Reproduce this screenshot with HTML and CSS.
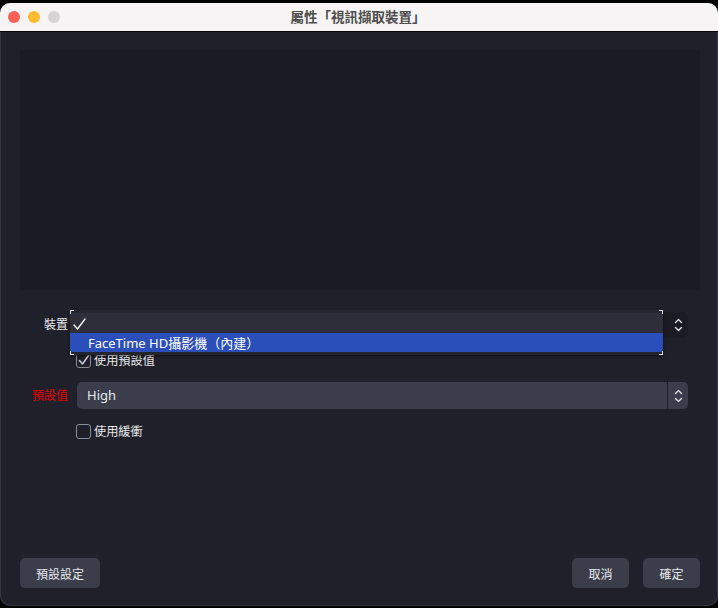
FILE: index.html
```html
<!DOCTYPE html>
<html>
<head>
  <meta charset="utf-8">
  <title>屬性「視訊擷取裝置」</title>
  <link rel="stylesheet" href="styles.css">
</head>
<body>
  <div class="window">
    <div class="titlebar">
      <div class="lights">
        <span class="light red"></span>
        <span class="light yellow"></span>
        <span class="light gray"></span>
      </div>
      <div class="title">屬性「視訊擷取裝置」</div>
    </div>

    <div class="content">
      <div class="preview"></div>

      <div class="form">
        <label class="label">裝置</label>
        <div class="combo combo-dark">
          <div class="combo-text"></div>
          <div class="combo-arrow">
            <svg width="9" height="14" viewBox="0 0 9 14" fill="none" stroke="#e6e6ea" stroke-width="1.3" stroke-linecap="round" stroke-linejoin="round">
              <path d="M1.5 4.5 4.5 1.5 7.5 4.5" />
              <path d="M1.5 9.5 4.5 12.5 7.5 9.5" />
            </svg>
          </div>

          <!-- open popup of the device list -->
          <div class="popup">
            <div class="popup-item">
              <svg class="tick" width="13" height="12" viewBox="0 0 13 12" fill="none" stroke="#f2f2f2" stroke-width="1.4" stroke-linecap="round" stroke-linejoin="round">
                <path d="M1 7 4.5 11 12 1" />
              </svg>
            </div>
            <div class="popup-item selected">FaceTime HD攝影機（內建）</div>
            <span class="mark tl"></span>
            <span class="mark tr"></span>
            <span class="mark bl"></span>
            <span class="mark br"></span>
          </div>
        </div>

        <span></span>
        <div class="check">
          <span class="box checked">
            <svg width="12" height="12" viewBox="0 0 12 12" fill="none" stroke="#c9cad0" stroke-width="1.5" stroke-linecap="round" stroke-linejoin="round">
              <path d="M1.5 6.5 4.5 10 10.5 1.5" />
            </svg>
          </span>
          <span>使用預設值</span>
        </div>

        <label class="label warn">預設值</label>
        <div class="combo">
          <div class="combo-text">High</div>
          <div class="combo-arrow sep">
            <svg width="9" height="14" viewBox="0 0 9 14" fill="none" stroke="#e6e6ea" stroke-width="1.3" stroke-linecap="round" stroke-linejoin="round">
              <path d="M1.5 4.5 4.5 1.5 7.5 4.5" />
              <path d="M1.5 9.5 4.5 12.5 7.5 9.5" />
            </svg>
          </div>
        </div>

        <span></span>
        <div class="check">
          <span class="box"></span>
          <span>使用緩衝</span>
        </div>
      </div>

      <div class="footer">
        <button class="btn btn-wide">預設設定</button>
        <div class="footer-right">
          <button class="btn">取消</button>
          <button class="btn">確定</button>
        </div>
      </div>
    </div>
  </div>
</body>
</html>
```

FILE: styles.css
```css
:root {
  --bg-color: #1f2029;
  --preview-color: #1a1b23;
  --field-color: #3b3e4a;
  --menu-color: #2d2e39;
  --select-color: #2a4fba;
  --text-color: #e8e8ec;
  --warn-color: #e60000;
  --border-color: #8a8c94;
}

html, body {
  margin: 0;
  background: #000;
}

body {
  width: 718px;
  height: 608px;
  overflow: hidden;
  font-family: "Noto Sans", "Noto Sans CJK TC", sans-serif;
  font-size: 12px;
  color: var(--text-color);
  -webkit-font-smoothing: antialiased;
}

.window {
  margin-top: 3px;
  height: 603px;
  border-radius: 10px;
  overflow: hidden;
  background: var(--bg-color);
  display: flex;
  flex-direction: column;
  box-shadow: inset 0 0 0 1px #34363e;
}

.titlebar {
  height: 28px;
  flex: none;
  display: flex;
  align-items: center;
  justify-content: center;
  position: relative;
  background: #f6f4f5;
  border-bottom: 1px solid #050505;
}

.lights {
  position: absolute;
  left: 8px;
  top: 8px;
  display: flex;
  gap: 8px;
}

.light {
  width: 12px;
  height: 12px;
  border-radius: 50%;
}

.light.red { background: #fe5f57; }
.light.yellow { background: #febc2e; }
.light.gray { background: #d6d5d6; }

.title {
  margin-left: -2px;
  margin-top: -2px;
  font-family: "Noto Sans CJK TC", sans-serif;
  font-size: 13.5px;
  font-weight: 700;
  color: #4d4d4d;
}

.content {
  flex: 1;
  display: flex;
  flex-direction: column;
  padding: 18px 18px 18px 20px;
}

.preview {
  height: 240px;
  background: var(--preview-color);
}

/* Property rows */
.form {
  margin-top: 22px;
  padding-right: 12px;
  display: grid;
  grid-template-columns: 48px 1fr;
  column-gap: 9px;
  row-gap: 14px;
  align-items: center;
}

.label {
  text-align: right;
  white-space: nowrap;
  line-height: 16px;
}

.label.warn {
  color: var(--warn-color);
}

.combo {
  position: relative;
  height: 27px;
  display: flex;
  border-radius: 5px;
  background: var(--field-color);
}

.combo-dark {
  height: 26px;
  background: var(--preview-color);
}

.combo-text {
  flex: 1;
  padding-left: 10px;
  font-size: 13px;
  line-height: 27px;
}

.combo-arrow {
  width: 20px;
  display: flex;
  align-items: center;
  justify-content: center;
}

.combo-arrow.sep {
  border-left: 1px solid var(--bg-color);
}

.popup {
  position: absolute;
  left: -7px;
  top: -2px;
  width: 593px;
  padding: 3px 0;
  background: #23242d;
  box-shadow: 0 1px 2px rgba(0, 0, 0, 0.5);
  z-index: 2;
}

.popup-item {
  height: 20px;
  display: flex;
  align-items: center;
  padding-left: 18px;
  background: var(--menu-color);
  font-size: 13px;
}

.popup-item .tick {
  margin-left: -15px;
  margin-top: 2px;
}

.popup-item.selected {
  height: 19px;
  background: var(--select-color);
  color: #fff;
}

.mark {
  position: absolute;
  width: 3px;
  height: 3px;
  border-color: #e0e0e0;
  border-style: solid;
  border-width: 0;
}

.mark.tl { left: 0; top: 0; border-top-width: 1px; border-left-width: 1px; }
.mark.tr { right: 0; top: 0; border-top-width: 1px; border-right-width: 1px; }
.mark.bl { left: 0; bottom: 0; border-bottom-width: 1px; border-left-width: 1px; }
.mark.br { right: 0; bottom: 0; border-bottom-width: 1px; border-right-width: 1px; }

.check {
  height: 16px;
  display: flex;
  align-items: center;
  gap: 3px;
  margin-left: -1px;
  font-family: "Noto Sans CJK TC", sans-serif;
  font-size: 12.2px;
}

.box {
  width: 13px;
  height: 13px;
  border: 1.5px solid var(--border-color);
  border-radius: 3px;
  display: flex;
  align-items: center;
  justify-content: center;
}

/* Dialog buttons */
.footer {
  margin-top: auto;
  display: flex;
  justify-content: space-between;
}

.footer-right {
  display: flex;
  gap: 14px;
}

button {
  font-family: "Noto Sans CJK TC", sans-serif;
}

.btn {
  height: 30px;
  width: 57px;
  border: none;
  border-radius: 5px;
  background: var(--field-color);
  color: var(--text-color);
  font-size: 12px;
  padding: 0;
}

.btn-wide {
  width: 80px;
}
```
